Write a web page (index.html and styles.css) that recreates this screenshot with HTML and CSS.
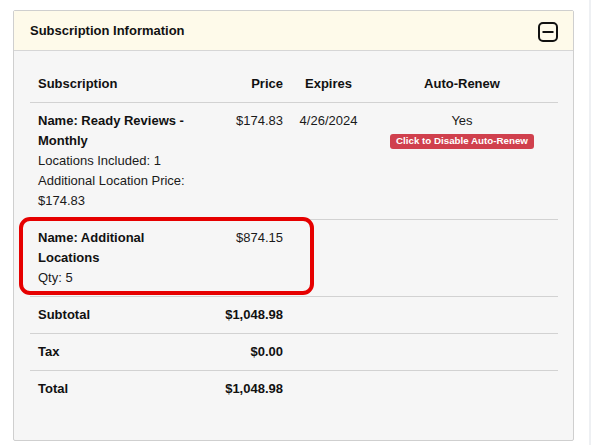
FILE: index.html
```html
<!DOCTYPE html>
<html lang="en">
<head>
<meta charset="utf-8">
<title>Subscription Information</title>
<link rel="stylesheet" href="styles.css">
</head>
<body>
<div class="page">
  <div class="panel">
    <div class="panel-heading">
      <span class="panel-title">Subscription Information</span>
      <svg class="collapse-icon" width="20" height="20" viewBox="0 0 20 20" aria-hidden="true">
        <rect x="1" y="1" width="18" height="18" rx="4" ry="4" fill="none" stroke="#111" stroke-width="2"/>
        <line x1="4.5" y1="10" x2="15.5" y2="10" stroke="#111" stroke-width="2"/>
      </svg>
    </div>
    <div class="panel-body">
      <table class="sub-table">
        <colgroup>
          <col class="c-sub">
          <col class="c-price">
          <col class="c-exp">
          <col class="c-auto">
        </colgroup>
        <thead>
          <tr>
            <th class="left">Subscription</th>
            <th class="right">Price</th>
            <th class="center">Expires</th>
            <th class="center">Auto-Renew</th>
          </tr>
        </thead>
        <tbody>
          <tr>
            <td class="left"><b>Name: Ready Reviews - Monthly</b><br>Locations Included: 1<br>Additional Location Price: $174.83</td>
            <td class="right">$174.83</td>
            <td class="center">4/26/2024</td>
            <td class="center">Yes<br><span class="label-danger">Click to Disable Auto-Renew</span></td>
          </tr>
          <tr>
            <td class="left"><b>Name: Additional Locations</b><br>Qty: 5</td>
            <td class="right">$874.15</td>
            <td></td>
            <td></td>
          </tr>
          <tr class="sum">
            <td class="left">Subtotal</td>
            <td class="right">$1,048.98</td>
            <td></td>
            <td></td>
          </tr>
          <tr class="sum">
            <td class="left">Tax</td>
            <td class="right">$0.00</td>
            <td></td>
            <td></td>
          </tr>
          <tr class="sum">
            <td class="left">Total</td>
            <td class="right">$1,048.98</td>
            <td></td>
            <td></td>
          </tr>
        </tbody>
      </table>
      <div class="highlight-box"></div>
    </div>
  </div>
</div>
<div class="edge-strip"></div>
</body>
</html>
```

FILE: styles.css
```css
html, body {
  margin: 0;
  padding: 0;
  background: #ffffff;
}

body {
  display: flex;
  justify-content: space-between;
  height: 445px;
  overflow: hidden;
  font-family: "Liberation Sans", Arial, sans-serif;
  font-size: 13px;
  color: #1a1a1a;
}

.page {
  padding: 10px 0 0 13px;
}

.edge-strip {
  width: 2px;
  height: 445px;
  background: #eef0f3;
}

.panel {
  width: 561px;
  box-sizing: border-box;
  border: 1px solid #cfcfcf;
  border-radius: 2px;
  background: #f6f6f6;
}

.panel-heading {
  display: flex;
  justify-content: space-between;
  align-items: center;
  height: 39px;
  padding: 0 15px 0 16px;
  background: #fefaea;
  border-bottom: 1px solid #d6d6d6;
}

.panel-title {
  font-weight: bold;
  font-size: 13px;
  line-height: 19px;
  color: #111;
}

.collapse-icon {
  display: block;
  margin-top: 3px;
}

.panel-body {
  position: relative;
  padding: 15px 15px 33px 16px;
}

.sub-table {
  width: 528px;
  table-layout: fixed;
  border-collapse: collapse;
  border-spacing: 0;
}

.c-sub { width: 176px; }
.c-price { width: 85px; }
.c-exp { width: 75px; }
.c-auto { width: 192px; }

.sub-table th,
.sub-table td {
  padding: 8px;
  line-height: 20px;
  vertical-align: top;
  font-size: 13px;
}

.sub-table th {
  font-weight: bold;
  color: #111;
}

.sub-table td {
  border-top: 1px solid #d2d2d2;
  color: #1a1a1a;
}

.sub-table b {
  color: #111;
}

.sub-table .sum td {
  font-weight: bold;
  color: #111;
}

.left { text-align: left; }
.right { text-align: right; }
.center { text-align: center; }

.label-danger {
  display: inline-block;
  padding: 2px 6px 3px;
  font-size: 9.75px;
  line-height: 10px;
  font-weight: bold;
  color: #ffffff;
  background: #d0404d;
  border-radius: 3px;
  vertical-align: top;
  margin-top: 3px;
  white-space: nowrap;
}

.highlight-box {
  position: absolute;
  left: 5px;
  top: 166px;
  width: 295px;
  height: 78px;
  box-sizing: border-box;
  border: 4px solid #e60000;
  border-radius: 11px;
  pointer-events: none;
}
```
